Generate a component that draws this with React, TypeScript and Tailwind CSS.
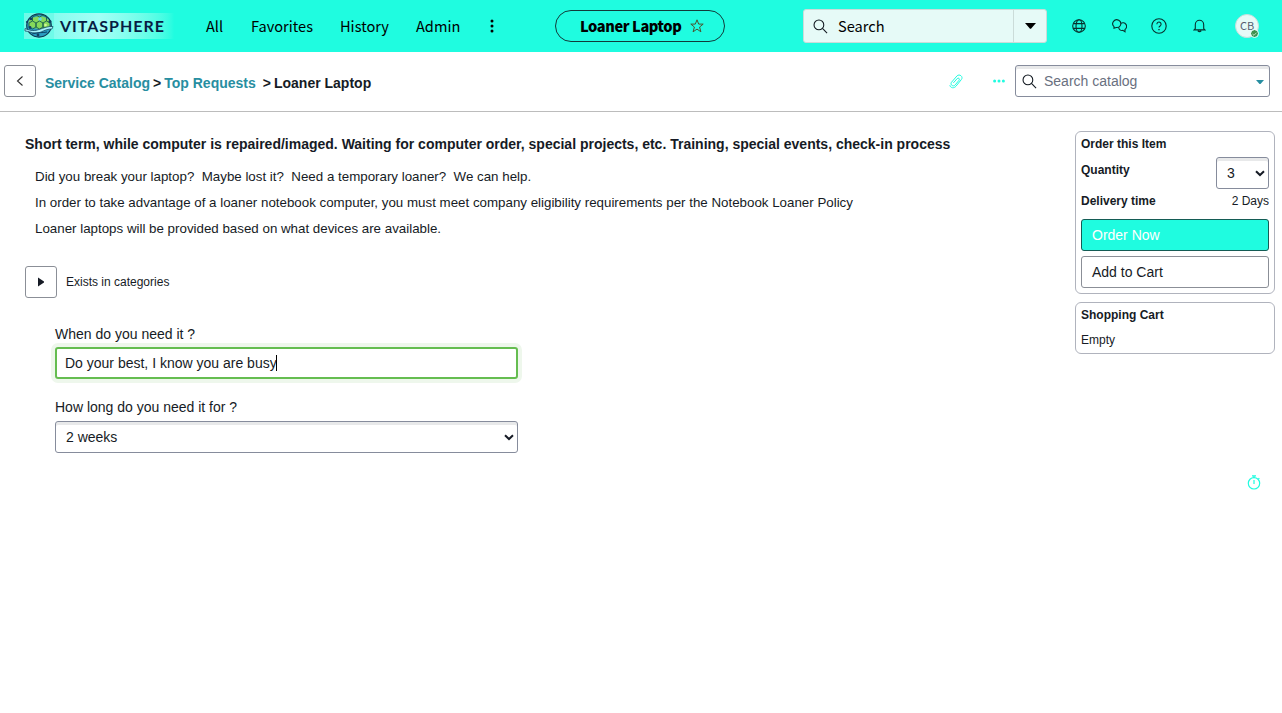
import React from "react";

const Chevron = ({ className }: { className: string }) => (
  <svg className={className} width="10" height="7" viewBox="0 0 10 7" fill="none" stroke="#161b25" strokeWidth="2">
    <path d="M1 1.2L5 5L9 1.2" />
  </svg>
);

const Magnifier = ({ size }: { size: number }) => (
  <svg width={size} height={size} viewBox="0 0 16 16" fill="none" stroke="#111820" strokeWidth="1.15">
    <circle cx="6.3" cy="6.3" r="5.2" />
    <path d="M10.1 10.1L15 15" />
  </svg>
);

function Logo() {
  return (
    <div className="flex h-[26px] w-[150px] items-center bg-linear-to-r from-[#6efbea] via-[#a4fff6] to-[#1ffce0]">
      <svg width="30" height="26" viewBox="0 0 30 26" className="shrink-0">
        <rect width="30" height="26" fill="#6ffbe9" />
        <ellipse cx="15" cy="12.5" rx="12.3" ry="11.6" fill="#2a9cc0" stroke="#0b3550" strokeWidth="1.1" />
        <path d="M4.5 9C7 2.5 21 .5 25.5 8L26 13L21 17L15 16L5 14Z" fill="#86d95b" />
        <path d="M5 10L8.5 8L12 10V14L8.5 16L5 14ZM12 10L15.5 8L19 10V14L15.5 16L12 14ZM19 10L22.5 8L26 10V14L22.5 16L19 14ZM8.5 8V4L12 2L15.5 4V8M15.5 4L19 2L22.5 4V8" fill="none" stroke="#18604f" strokeWidth=".9" />
        <path d="M1 15.5C7 18 11 18 15 16.5C20 15 24 13 29 13.5L28 16C20 16 18 20 12 20C7 20 4 18 1 18Z" fill="#a7f3fb" stroke="#0b3c58" strokeWidth=".7" />
        <path d="M8 21C14 19 19 20 23 19" fill="none" stroke="#0d4569" />
        <g fill="#113e63">
          <circle cx="6" cy="14.5" r="1.4" />
          <circle cx="26" cy="8.5" r="1.5" />
          <circle cx="7" cy="6" r="1.3" />
          <circle cx="14" cy="22" r="1.4" />
          <circle cx="3" cy="9" r="1.1" />
        </g>
        <circle cx="16" cy="6" r="1.8" fill="#65d7ec" />
        <circle cx="21.5" cy="12" r="1.3" fill="#d6f797" />
      </svg>
      <span className="ml-[6px] font-['Lato',sans-serif] text-[16px] leading-[26px] font-bold tracking-[0.98px] text-[#071c43]">VITASPHERE</span>
    </div>
  );
}

function Header() {
  return (
    <header className="flex h-[52px] w-full items-center bg-[#1ffce0] pl-6 font-['Noto_Sans_CJK_SC',sans-serif] text-[14.6px] leading-5 text-black">
      <Logo />
      <nav className="ml-8 flex w-[349px] items-center">
        <span className="w-[45px]">All</span>
        <span className="w-[89px]">Favorites</span>
        <span className="w-[76px]">History</span>
        <span className="w-[74px]">Admin</span>
        <svg width="4" height="14" viewBox="0 0 4 14">
          <circle cx="2" cy="2" r="1.5" />
          <circle cx="2" cy="7" r="1.5" />
          <circle cx="2" cy="12" r="1.5" />
        </svg>
      </nav>
      <div className="flex h-8 w-[170px] items-center rounded-full border border-[#113b3a] pl-6 font-black">
        <span className="w-[110px] tracking-[-0.4px] whitespace-nowrap">Loaner Laptop</span>
        <svg width="14" height="14" viewBox="0 0 14 14" fill="none" stroke="#4c5430" strokeWidth="1">
          <path d="M7 .8L8.7 5.1H13.2L9.6 8L10.9 12.8L7 10.1L3.1 12.8L4.4 8L.8 5.1H5.3Z" />
        </svg>
      </div>
      <div className="ml-[78px] flex h-[34px] w-[244px] rounded-[3px] border border-[#cbdcd9] bg-[#e6faf7]">
        <div className="flex w-[209px] items-center pl-[9px]">
          <Magnifier size={15} />
          <span className="ml-[10px]">Search</span>
        </div>
        <div className="flex flex-1 items-center justify-center border-l border-[#cbdcd9]">
          <svg width="11" height="6" viewBox="0 0 11 6"><path d="M0 0H11L6 5.7H5Z" /></svg>
        </div>
      </div>
      <div className="ml-[25px] flex items-center">
        <svg width="14" height="14" viewBox="0 0 14 14" fill="none" stroke="#07312d" strokeWidth="1.1">
          <circle cx="7" cy="7" r="6.3" />
          <ellipse cx="7" cy="7" rx="3" ry="6.3" />
          <path d="M1.3 4.6H12.7M1.3 9.4H12.7" />
        </svg>
        <svg className="ml-[25.5px]" width="15" height="14" viewBox="0 0 15 14" fill="none" stroke="#07312d" strokeWidth="1.1">
          <path d="M2 9.3V7.7A4 4 0 1 1 8.4 6.4C7.4 8.2 5.8 8.7 4.2 8.5Z" />
          <path d="M8.8 4.4A3.7 3.7 0 1 1 13 10.5V12.8L10.8 11.4C8.6 11.7 6.9 10.6 6.6 8.3" />
        </svg>
        <svg className="ml-6" width="16" height="16" viewBox="0 0 16 16" fill="none" stroke="#07312d" strokeWidth="1.1">
          <circle cx="8" cy="8" r="7.2" />
          <path d="M5.9 6.2A2.1 2.1 0 1 1 9.4 7.7Q8 8.6 8 9.5" />
          <path d="M8 11V12.3" strokeWidth="1.3" />
        </svg>
        <svg className="ml-[26px]" width="13" height="14" viewBox="0 0 13 14" fill="none" stroke="#07312d" strokeWidth="1.1">
          <path d="M2.3 9.5V5.7A4.2 4.4 0 0 1 10.7 5.7V9.5L12 10.9H1Z" />
          <path d="M4.8 11.5Q6.5 13.4 8.2 11.5" strokeWidth="1.4" />
        </svg>
        <div className="relative ml-[29.5px] flex size-6 items-center justify-center rounded-full border border-[#c5dedb] bg-[#e6faf7] text-[11px] leading-[14px] text-[#555e70]">
          <span className="mb-[3px]">CB</span>
          <span className="absolute right-0 bottom-0 flex size-[7px] items-center justify-center rounded-full bg-[#3f9150] outline outline-[#e6faf7]">
            <svg width="5" height="4" viewBox="0 0 5 4" fill="none" stroke="#d8f2dc" strokeWidth=".8"><path d="M.5 2L2 3.3L4.5.7" /></svg>
          </span>
        </div>
      </div>
    </header>
  );
}

function CatalogBar() {
  return (
    <div className="flex h-[60px] w-full items-center border-b border-[#bcbcbc] pb-px pl-1 text-[14px] leading-4 font-bold">
      <button className="flex size-8 items-center justify-center rounded-[3px] border border-[#8b8f97]">
        <svg width="8" height="12" viewBox="0 0 8 12" fill="none" stroke="#333" strokeWidth="1.1"><path d="M6.5 1.5L1.5 6L6.5 10.5" /></svg>
      </button>
      <div className="ml-[9px] w-[904px] pt-1 whitespace-pre">
        <span className="text-[#278ea1]">Service Catalog</span>
        <span className="ml-[3px]">&gt;</span>
        <span className="ml-[3px] text-[#278ea1]">Top Requests</span>
        <span className="ml-[7px]">&gt;</span>
        <span className="ml-[3px]">Loaner Laptop</span>
      </div>
      <svg width="14" height="15" viewBox="0 0 14 15" fill="none" stroke="#1ffce0" strokeWidth="1" strokeLinecap="round">
        <path d="M4.6 8.6L8.2 4.6C9.4 3.3 11.2 4.8 10.1 6.2L6.2 10.9C4.2 13.2.9 10.9 2.4 8.4L7.9 2C10.4-.6 14.6 2.6 12.4 5.5L7 12.2C5 14.5 1.6 14.3.9 11.6" />
      </svg>
      <svg className="ml-[30px]" width="12" height="4" viewBox="0 0 12 4" fill="#1ffce0">
        <circle cx="1.6" cy="2" r="1.5" />
        <circle cx="6" cy="2" r="1.5" />
        <circle cx="10.4" cy="2" r="1.5" />
      </svg>
      <div className="ml-[10px] flex h-8 w-[255px] items-center rounded-[3px] border border-[#868c9c] pl-[6px] font-normal shadow-[inset_0_3px_0_#e8e9ea]">
        <Magnifier size={15} />
        <span className="ml-[7px] w-[212px] text-[#697080]">Search catalog</span>
        <svg className="mt-px" width="8" height="4" viewBox="0 0 8 4" fill="#278ea1"><path d="M0 0H8L4.5 4H3.5Z" /></svg>
      </div>
    </div>
  );
}

function RequestForm() {
  return (
    <div className="mt-[26px] ml-[30px] flex w-[463px] flex-col text-[14px] leading-5">
      <label htmlFor="when">When do you need it ?</label>
      <div id="when" className="mt-[3px] flex h-8 items-center rounded-[3px] border-2 border-[#65bd50] px-2 shadow-[0_0_0_4px_#eef7ec]">
        <span>Do your best, I know you are busy</span>
        <span className="-ml-px h-4 w-px bg-black" />
      </div>
      <label htmlFor="duration" className="mt-[18px]">How long do you need it for ?</label>
      <div id="duration" className="mt-1 flex h-8 items-center justify-between rounded-[3px] border border-[#868c9c] pr-[3px] pl-[10px] shadow-[inset_0_3px_0_#e8e9ea]">
        <span>2 weeks</span>
        <Chevron className="" />
      </div>
    </div>
  );
}

function OrderPanel() {
  return (
    <aside className="mt-[19px] flex w-[200px] flex-col gap-2 text-[12px] leading-4">
      <section className="h-[163px] rounded-md border border-[#b0b3bd] px-[5px] pt-1">
        <h2 className="font-bold">Order this Item</h2>
        <div className="mt-[5px] flex h-8 justify-between">
          <span className="pt-[5px] font-bold">Quantity</span>
          <div className="flex h-8 w-[53px] items-center justify-between rounded-[3px] border border-[#868c9c] pr-[3px] pl-[10px] text-[14px] shadow-[inset_0_3px_0_#e8e9ea]">
            3<Chevron className="" />
          </div>
        </div>
        <div className="mt-1 flex justify-between">
          <span className="font-bold">Delivery time</span>
          <span>2 Days</span>
        </div>
        <button className="mt-[10px] block h-8 w-full rounded-[3px] border border-[#145c55] bg-[#1ffce0] pl-[10px] text-left text-[14px] text-white">Order Now</button>
        <button className="mt-[5px] block h-8 w-full rounded-[3px] border border-[#8b8f97] pl-[10px] text-left text-[14px]">Add to Cart</button>
      </section>
      <section className="h-[52px] rounded-md border border-[#b0b3bd] px-[5px] pt-1">
        <h2 className="font-bold">Shopping Cart</h2>
        <p className="mt-[9px]">Empty</p>
      </section>
      <svg className="mt-[113px] ml-[172px]" width="14" height="15" viewBox="0 0 14 15" fill="none" stroke="#1ffce0" strokeWidth="1.2">
        <circle cx="7" cy="8.3" r="5.7" />
        <path d="M5 .8H9M7 1V3M7 5V9M11.4 3.2L12.4 4.2" />
      </svg>
    </aside>
  );
}

export default function App() {
  return (
    <div className="flex h-[713px] w-full flex-col overflow-hidden bg-white font-['Liberation_Sans',Arial,sans-serif] text-[#161b25]">
      <Header />
      <CatalogBar />
      <div className="flex">
        <main className="w-[1075px] pl-[25px]">
          <h1 className="mt-6 text-[14px] leading-4 font-bold whitespace-nowrap">Short term, while computer is repaired/imaged. Waiting for computer order, special projects, etc. Training, special events, check-in process</h1>
          <div className="mt-3 ml-[10px] text-[13.33px] leading-[26px] whitespace-pre">
            <p>Did you break your laptop?  Maybe lost it?  Need a temporary loaner?  We can help.</p>
            <p>In order to take advantage of a loaner notebook computer, you must meet company eligibility requirements per the Notebook Loaner Policy</p>
            <p>Loaner laptops will be provided based on what devices are available.</p>
          </div>
          <div className="mt-6 flex items-center gap-[9px] text-[12px]">
            <button className="flex size-8 items-center justify-center rounded-[3px] border border-[#8b8f97]">
              <svg width="6" height="10" viewBox="0 0 6 10" fill="#161b25"><path d="M0 .5L6 4.5V5.5L0 9.5Z" /></svg>
            </button>
            <span>Exists in categories</span>
          </div>
          <RequestForm />
        </main>
        <OrderPanel />
      </div>
    </div>
  );
}
